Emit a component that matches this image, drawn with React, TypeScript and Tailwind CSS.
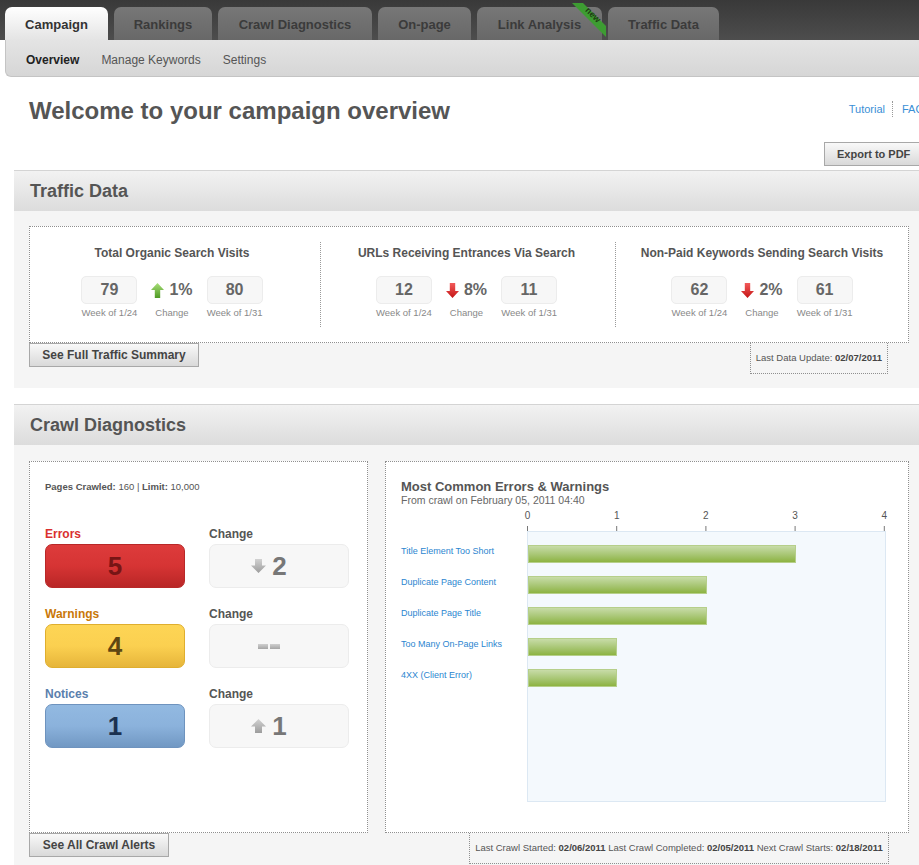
import React from 'react';

const tabs = [
  { label: 'Campaign', w: 'w-[103px]', active: true },
  { label: 'Rankings', w: 'w-[98px]' },
  { label: 'Crawl Diagnostics', w: 'w-[154px]' },
  { label: 'On-page', w: 'w-[93px]' },
  { label: 'Link Analysis', w: 'w-[125px]', isNew: true },
  { label: 'Traffic Data', w: 'w-[111px]' },
];

const trafficStats = [
  { title: 'Total Organic Search Visits', before: '79', after: '80', change: '1%', up: true, col: 'w-[290px] pr-[6px]' },
  { title: 'URLs Receiving Entrances Via Search', before: '12', after: '11', change: '8%', up: false, col: 'w-[295px] border-l border-dotted border-[#9a9a9a] pr-[3px]' },
  { title: 'Non-Paid Keywords Sending Search Visits', before: '62', after: '61', change: '2%', up: false, col: 'w-[293px] border-l border-dotted border-[#9a9a9a]' },
];

const issues = [
  { label: 'Title Element Too Short', value: 3 },
  { label: 'Duplicate Page Content', value: 2 },
  { label: 'Duplicate Page Title', value: 2 },
  { label: 'Too Many On-Page Links', value: 1 },
  { label: '4XX (Client Error)', value: 1 },
];

function ChangeArrow({ up }: { up: boolean }) {
  if (up) {
    return (
      <svg width="13" height="15" viewBox="0 0 13 15">
        <defs>
          <linearGradient id="greenUp" x1="0" y1="0" x2="0" y2="1">
            <stop offset="0" stopColor="#a8de78" />
            <stop offset="1" stopColor="#4e9a24" />
          </linearGradient>
        </defs>
        <path d="M6.5 0L13 7H9.2v8H3.8V7H0z" fill="url(#greenUp)" />
      </svg>
    );
  }
  return (
    <svg width="13" height="15" viewBox="0 0 13 15">
      <defs>
        <linearGradient id="redDown" x1="0" y1="0" x2="0" y2="1">
          <stop offset="0" stopColor="#f25a5a" />
          <stop offset="1" stopColor="#c41515" />
        </linearGradient>
      </defs>
      <path d="M3.8 0h5.4v8H13l-6.5 7L0 8h3.8z" fill="url(#redDown)" />
    </svg>
  );
}

function GrayArrow({ up }: { up: boolean }) {
  return (
    <svg width="15" height="14" viewBox="0 0 15 14">
      <defs>
        <linearGradient id={up ? 'grayUp' : 'grayDown'} x1="0" y1="0" x2="0" y2="1">
          <stop offset="0" stopColor="#d2d2d2" />
          <stop offset="1" stopColor="#9c9c9c" />
        </linearGradient>
      </defs>
      {up ? (
        <path d="M7.5 0L15 7.5h-4V14H4V7.5H0z" fill="url(#grayUp)" />
      ) : (
        <path d="M4 0h7v6.5h4L7.5 14 0 6.5h4z" fill="url(#grayDown)" />
      )}
    </svg>
  );
}

function SectionHeader({ title }: { title: string }) {
  return (
    <div className="flex h-[41px] items-center border-t border-[#d4d4d4] bg-linear-to-b from-[#f2f2f2] to-[#dcdcdc] pl-[16px]">
      <h2 className="text-[18px] font-bold text-[#555]">{title}</h2>
    </div>
  );
}

function GrayButton({ label, w }: { label: string; w: string }) {
  return (
    <button className={`${w} h-[24px] border border-[#a8a8a8] bg-linear-to-b from-[#f9f9f9] to-[#d9d9d9] text-[12px] font-bold text-[#444]`}>
      {label}
    </button>
  );
}

function CountBox({ label, labelColor, value, box, num }: { label: string; labelColor: string; value: string; box: string; num: string }) {
  return (
    <div className="w-[140px]">
      <p className={`mb-[3px] text-[12px] leading-[14px] font-bold ${labelColor}`}>{label}</p>
      <div className={`flex h-[44px] items-center justify-center rounded-[7px] border ${box}`}>
        <span className={`text-[26px] font-bold ${num}`}>{value}</span>
      </div>
    </div>
  );
}

function ChangeBox({ children }: { children: React.ReactNode }) {
  return (
    <div className="w-[140px]">
      <p className="mb-[3px] text-[12px] leading-[14px] font-bold text-[#555]">Change</p>
      <div className="flex h-[44px] items-center justify-center gap-[6px] rounded-[7px] border border-[#ececec] bg-[#f7f7f7] pr-[20px]">
        {children}
      </div>
    </div>
  );
}

export default function App(): JSX.Element {
  return (
    <div className="h-[865px] w-[919px] overflow-hidden bg-white font-['Liberation_Sans',Arial,Helvetica,sans-serif]">
      <div className="w-[940px]">
        {/* top tabs */}
        <div className="flex h-[40px] items-end gap-[6px] bg-linear-to-b from-[#393939] to-[#4d4d4d] pl-[5px]">
          {tabs.map((t) => (
            <div
              key={t.label}
              className={`relative flex h-[33px] ${t.w} items-center justify-center rounded-t-[7px] pt-[2px] text-[13px] font-bold ${
                t.active ? 'bg-linear-to-b from-white to-[#e4e4e4] text-[#333]' : 'bg-linear-to-b from-[#777] to-[#686868] text-[#3b3b3b]'
              }`}
            >
              {t.label}
              {t.isNew && (
                <svg className="absolute top-[-4px] right-[-4px]" width="34" height="34" viewBox="0 0 34 34">
                  <path d="M0 0H11L34 23V34Z" fill="#3d9c32" />
                  <text
                    x="19"
                    y="14"
                    fontSize="9"
                    fontWeight="bold"
                    fill="#1f3d14"
                    textAnchor="middle"
                    transform="rotate(45 19 14)"
                    fontFamily="Liberation Sans, Arial, sans-serif"
                  >
                    new
                  </text>
                </svg>
              )}
            </div>
          ))}
        </div>

        {/* sub nav */}
        <div className="ml-[5px] flex h-[37px] items-center gap-[22px] rounded-bl-[6px] border-b border-l border-[#c4c4c4] bg-linear-to-b from-[#e4e4e4] to-[#d6d6d6] pt-[3px] pl-[20px] text-[12px]">
          <span className="font-bold text-[#222]">Overview</span>
          <span className="text-[#555]">Manage Keywords</span>
          <span className="text-[#555]">Settings</span>
        </div>

        <div className="px-[14px]">
          <div className="mt-[20px] flex items-start justify-between pl-[15px]">
            <h1 className="text-[24px] leading-[28px] font-bold text-[#555]">Welcome to your campaign overview</h1>
            <div className="mt-[4px] mr-[2px] flex items-center text-[11px] leading-[14px] text-[#3a8fd6]">
              <span>Tutorial</span>
              <span className="mr-[9px] ml-[7px] h-[16px] border-l border-dotted border-[#999]" />
              <span>FAQ</span>
            </div>
          </div>

          <div className="mt-[17px] flex justify-end">
            <button className="h-[24px] w-[102px] border border-[#a8a8a8] bg-linear-to-b from-[#f9f9f9] to-[#d9d9d9] pl-[12px] text-left text-[11px] font-bold text-[#444]">
              Export to PDF
            </button>
          </div>

          {/* traffic data */}
          <section className="mt-[4px]">
            <SectionHeader title="Traffic Data" />
            <div className="bg-[#f5f5f5] pt-[15px] pb-[14px] pl-[15px]">
              <div className="flex w-[880px] border border-dotted border-[#8f8f8f] bg-white py-[15px]">
                {trafficStats.map((s) => (
                  <div key={s.title} className={`${s.col} flex flex-col items-center pt-[4px] pb-[8px]`}>
                    <h3 className="text-[12px] leading-[14px] font-bold text-[#555]">{s.title}</h3>
                    <div className="mt-[16px] flex items-start gap-[14px]">
                      <div className="flex flex-col items-center">
                        <div className="flex h-[28px] w-[56px] items-center justify-center rounded-[5px] border border-[#ececec] bg-[#f7f7f7] text-[16px] font-bold text-[#666]">
                          {s.before}
                        </div>
                        <span className="mt-[3px] text-[9.5px] leading-[12px] text-[#888]">Week of 1/24</span>
                      </div>
                      <div className="flex flex-col items-center">
                        <div className="flex h-[28px] items-center gap-[5px] text-[16px] font-bold text-[#666]">
                          <ChangeArrow up={s.up} />
                          {s.change}
                        </div>
                        <span className="mt-[3px] text-[9.5px] leading-[12px] text-[#888]">Change</span>
                      </div>
                      <div className="flex flex-col items-center">
                        <div className="flex h-[28px] w-[56px] items-center justify-center rounded-[5px] border border-[#ececec] bg-[#f7f7f7] text-[16px] font-bold text-[#666]">
                          {s.after}
                        </div>
                        <span className="mt-[3px] text-[9.5px] leading-[12px] text-[#888]">Week of 1/31</span>
                      </div>
                    </div>
                  </div>
                ))}
              </div>
              <div className="flex w-[880px] items-start justify-between">
                <GrayButton label="See Full Traffic Summary" w="w-[170px]" />
                <div className="mr-[21px] flex h-[31px] items-center border border-t-0 border-dotted border-[#8f8f8f] px-[5px] text-[9.5px] text-[#555]">
                  Last Data Update:&nbsp;<b className="text-[#444]">02/07/2011</b>
                </div>
              </div>
            </div>
          </section>

          {/* crawl diagnostics */}
          <section className="mt-[16px]">
            <SectionHeader title="Crawl Diagnostics" />
            <div className="bg-[#f5f5f5] pt-[16px] pb-[8px] pl-[15px]">
              <div className="flex gap-[17px]">
                <div className="h-[372px] w-[339px] border border-dotted border-[#8f8f8f] bg-white pt-[19px] pl-[15px]">
                  <p className="text-[9.5px] leading-[12px] text-[#555]">
                    <b>Pages Crawled:</b> 160 | <b>Limit:</b> 10,000
                  </p>
                  <div className="mt-[34px] flex flex-col gap-[19px]">
                    <div className="flex gap-[24px]">
                      <CountBox
                        label="Errors"
                        labelColor="text-[#d93030]"
                        value="5"
                        box="border-[#b82828] bg-linear-to-b from-[#dd3b3b] via-[#d63434] to-[#b92626]"
                        num="text-[#771515]"
                      />
                      <ChangeBox>
                        <GrayArrow up={false} />
                        <span className="text-[26px] font-bold text-[#777]">2</span>
                      </ChangeBox>
                    </div>
                    <div className="flex gap-[24px]">
                      <CountBox
                        label="Warnings"
                        labelColor="text-[#c97808]"
                        value="4"
                        box="border-[#dfae2e] bg-linear-to-b from-[#fdd555] via-[#fbd050] to-[#e6b53a]"
                        num="text-[#5e4612]"
                      />
                      <ChangeBox>
                        <span className="flex gap-[2px]">
                          <span className="h-[5px] w-[10px] bg-linear-to-b from-[#d0d0d0] to-[#a5a5a5]" />
                          <span className="h-[5px] w-[10px] bg-linear-to-b from-[#d0d0d0] to-[#a5a5a5]" />
                        </span>
                      </ChangeBox>
                    </div>
                    <div className="flex gap-[24px]">
                      <CountBox
                        label="Notices"
                        labelColor="text-[#5a80ad]"
                        value="1"
                        box="border-[#6e93be] bg-linear-to-b from-[#92b9e1] via-[#8bb2dc] to-[#7198c3]"
                        num="text-[#1b3150]"
                      />
                      <ChangeBox>
                        <GrayArrow up={true} />
                        <span className="text-[26px] font-bold text-[#777]">1</span>
                      </ChangeBox>
                    </div>
                  </div>
                </div>

                <div className="h-[372px] w-[524px] border border-dotted border-[#8f8f8f] bg-white pt-[17px] pl-[15px]">
                  <h3 className="text-[13px] leading-[15px] font-bold text-[#555]">Most Common Errors &amp; Warnings</h3>
                  <p className="text-[10.5px] leading-[13px] text-[#666]">From crawl on February 05, 2011 04:40</p>
                  <svg className="ml-[120px]" width="370" height="24" viewBox="0 0 370 24">
                    {[0, 1, 2, 3, 4].map((n) => (
                      <g key={n}>
                        <text
                          x={6.5 + n * 89.2}
                          y="12"
                          fontSize="10"
                          fill="#555"
                          textAnchor="middle"
                          fontFamily="Liberation Sans, Arial, sans-serif"
                        >
                          {n}
                        </text>
                        <line x1={6.5 + n * 89.2} x2={6.5 + n * 89.2} y1="19" y2="24" stroke="#777" strokeWidth="1" />
                      </g>
                    ))}
                  </svg>
                  <div className="flex">
                    <div className="flex w-[126px] flex-col gap-[13px] pt-[14px]">
                      {issues.map((i) => (
                        <div key={i.label} className="h-[18px] text-[9px] leading-[13px] text-[#2c86d0]">
                          {i.label}
                        </div>
                      ))}
                    </div>
                    <div className="flex h-[271px] w-[359px] flex-col gap-[13px] border border-[#dce8f3] bg-[#f4f9fd] pt-[13px]">
                      {issues.map((i) => (
                        <div
                          key={i.label}
                          className="h-[18px] border border-[#b6cf8a] bg-linear-to-b from-[#c8dca8] to-[#8db340]"
                          style={{ width: `${i.value * 89.3}px` }}
                        />
                      ))}
                    </div>
                  </div>
                </div>
              </div>
              <div className="flex w-[880px] items-start justify-between">
                <GrayButton label="See All Crawl Alerts" w="w-[140px]" />
                <div className="mr-[20px] flex h-[31px] w-[420px] items-center justify-center border border-t-0 border-dotted border-[#8f8f8f] text-[9.5px] text-[#555]">
                  <span>
                    Last Crawl Started: <b className="text-[#444]">02/06/2011</b> Last Crawl Completed:{' '}
                    <b className="text-[#444]">02/05/2011</b> Next Crawl Starts: <b className="text-[#444]">02/18/2011</b>
                  </span>
                </div>
              </div>
            </div>
          </section>
        </div>
      </div>
    </div>
  );
}
